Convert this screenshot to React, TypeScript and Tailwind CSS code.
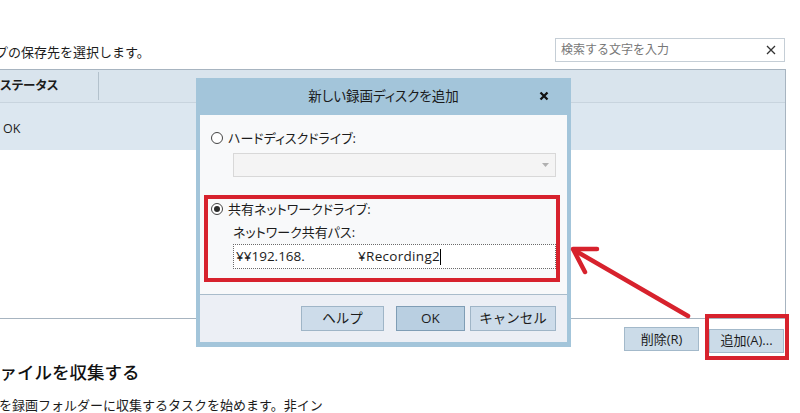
import React from "react";

const Radio = ({ checked }: { checked?: boolean }) => (
  <span className="w-[12px] h-[12px] rounded-full border border-[#444] bg-white flex items-center justify-center shrink-0">
    {checked && <span className="w-[6px] h-[6px] rounded-full bg-[#2a2a2a]" />}
  </span>
);

export default function App() {
  return (
    <div className="relative w-[800px] h-[413px] overflow-hidden bg-white text-[#1c1c1c] font-['Open_Sans','Noto_Sans_CJK_JP',sans-serif]">
      {/* top row */}
      <div className="flex items-start justify-between pt-[38px] pr-[15px]">
        <p className="-ml-[18px] pt-[6px] text-[13px] leading-[16px] whitespace-nowrap">ップの保存先を選択します。</p>
        <div className="w-[230px] h-[24px] border border-[#c5ced6] bg-white flex items-center justify-between pl-[5px] pr-[8px]">
          <span className="text-[12px] text-[#777] leading-none">検索する文字を入力</span>
          <svg width="10" height="10" viewBox="0 0 10 10">
            <path d="M1 1L9 9M9 1L1 9" stroke="#333" strokeWidth="1.3" />
          </svg>
        </div>
      </div>

      {/* table */}
      <div className="mt-[7px] w-[786px] h-[250px] border-t border-r border-b border-[#a7b4c0] flex flex-col">
        <div className="h-[33px] bg-[#d9e4ed] flex border-b border-[#c8d4de]">
          <div className="w-[98px] h-full flex items-center">
            <span className="text-[12.5px] font-bold leading-none [font-feature-settings:'palt']">ステータス</span>
          </div>
          <div className="w-px my-[2px] bg-[#b3c1cc]" />
        </div>
        <div className="h-[47px] bg-[#dce7f0] flex items-center pl-[3px] pt-[6px]">
          <span className="text-[12.5px] leading-none">OK</span>
        </div>
        <div className="flex-1 bg-white" />
      </div>

      {/* buttons */}
      <div className="mt-[8px] flex justify-end gap-[10px] pr-[16px]">
        <button className="w-[75px] h-[24px] bg-[#cbdbe8] border border-[#a3b9ca] text-[13px] leading-none">削除(R)</button>
        <div className="relative">
          <button className="w-[75px] h-[24px] bg-[#cbdbe8] border border-[#a3b9ca] text-[13px] leading-none">追加(A)...</button>
          <div className="absolute -top-[13px] -left-[4px] -right-[5px] -bottom-[7px] border-[4px] border-[#d7222d] pointer-events-none" />
        </div>
      </div>

      {/* heading */}
      <h2 className="mt-[8px] -ml-[18px] text-[17.5px] font-medium leading-[22px] whitespace-nowrap text-[#111]">ファイルを収集する</h2>
      <p className="mt-[14px] -ml-[1px] text-[13px] leading-[16px] whitespace-nowrap">を録画フォルダーに収集するタスクを始めます。非イン</p>

      {/* dialog */}
      <div className="absolute left-[196px] top-[78px] w-[375px] h-[269px] bg-[#a3c5da] flex flex-col px-[4px] pb-[5px]">
        <div className="h-[37px] relative flex items-center justify-center">
          <span className="text-[13.5px] leading-none text-[#1a1a1a] [font-feature-settings:'palt']">新しい録画ディスクを追加</span>
          <svg className="absolute right-[18px] top-[13px]" width="10" height="10" viewBox="0 0 10 10">
            <path d="M1.5 1.5L8.5 8.5M8.5 1.5L1.5 8.5" stroke="#111" strokeWidth="2.3" />
          </svg>
        </div>
        <div className="flex-1 flex flex-col">
          <div className="h-[180px] bg-[#f8f9fa] flex flex-col pt-[16px] border-b border-[#a9bccb] [font-feature-settings:'palt']">
            <div className="h-[14px] flex items-center gap-[5px] ml-[11px]">
              <Radio />
              <span className="text-[13px] leading-none">ハードディスクドライブ:</span>
            </div>
            <div className="mt-[8px] ml-[33px] w-[323px] h-[24px] bg-[#f4f4f4] border border-[#d8d8d8] flex justify-end">
              <div className="w-[20px] h-full flex items-center justify-center">
                <svg width="7" height="4" viewBox="0 0 7 4">
                  <path d="M0 0H7L3.5 4Z" fill="#b0b0b0" />
                </svg>
              </div>
            </div>
            <div className="mt-[18px] ml-[4px] w-[356px] h-[87px] border-[4px] border-[#d7222d] flex flex-col pt-[3px]">
              <div className="h-[14px] flex items-center gap-[5px] ml-[3px]">
                <Radio checked />
                <span className="text-[13px] leading-none">共有ネットワークドライブ:</span>
              </div>
              <div className="mt-[9px] ml-[25px] h-[14px] flex items-center">
                <span className="text-[13px] leading-none">ネットワーク共有パス:</span>
              </div>
              <div className="mt-[5px] ml-[25px] w-[323px] h-[25px] bg-white border border-dotted border-[#6a6a6a] flex items-center pl-[2px]">
                <span className="inline-block w-[122px] text-[13.5px] leading-none whitespace-nowrap">¥¥192.168.</span>
                <span className="text-[13.5px] leading-none whitespace-nowrap tracking-[0.3px]">¥Recording2</span>
                <span className="w-px h-[16px] bg-black" />
              </div>
            </div>
          </div>
          <div className="flex-1 bg-[#eceff5] flex justify-end items-start pt-[11px] pr-[11px]">
            <button className="w-[83px] h-[25px] bg-[#cddcea] border border-[#9fb5c7] text-[13.5px] leading-none">ヘルプ</button>
            <button className="ml-[12px] w-[69px] h-[25px] bg-[#b9cfe1] border border-[#7f9db5] text-[13.5px] leading-none">OK</button>
            <button className="ml-[5px] w-[86px] h-[25px] bg-[#cddcea] border border-[#9fb5c7] text-[13.5px] leading-none">キャンセル</button>
          </div>
        </div>
      </div>

      {/* arrow annotation */}
      <svg className="absolute inset-0 pointer-events-none" width="800" height="413" viewBox="0 0 800 413">
        <path d="M688 316L574 250" stroke="#d7222d" strokeWidth="4.5" strokeLinecap="round" fill="none" />
        <path d="M597 249L573 249L585 272" stroke="#d7222d" strokeWidth="4.5" strokeLinecap="round" strokeLinejoin="round" fill="none" />
      </svg>
    </div>
  );
}
